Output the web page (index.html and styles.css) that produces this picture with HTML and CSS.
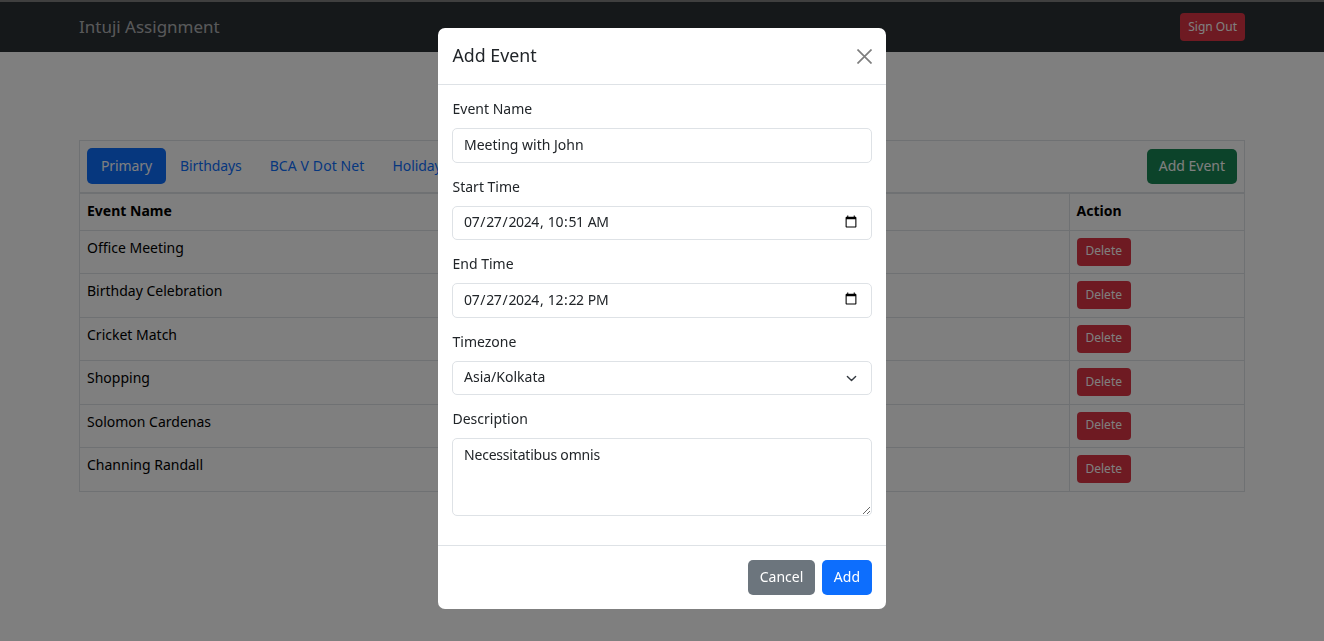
FILE: index.html
```html
<!DOCTYPE html>
<html lang="en">
<head>
  <meta charset="UTF-8" />
  <meta name="viewport" content="width=device-width, initial-scale=1.0"/>
  <title>Intuji Assignment</title>
  <link rel="stylesheet" href="styles.css">
</head>
<body>
  <nav class="navbar">
    <div class="container navbar-inner">
      <a class="brand" href="#">Intuji Assignment</a>
      <button class="btn btn-danger btn-signout">Sign Out</button>
    </div>
  </nav>

  <main class="container">
    <div class="events">
      <div class="events-head">
        <ul class="tabs">
          <li class="tab active">Primary</li>
          <li class="tab">Birthdays</li>
          <li class="tab tab-wide">BCA V Dot Net</li>
          <li class="tab">Holidays</li>
        </ul>
        <button class="btn btn-success">Add Event</button>
      </div>
      <table class="events-table">
        <thead>
          <tr><th>Event Name</th><th class="col-action">Action</th></tr>
        </thead>
        <tbody>
          <tr><td>Office Meeting</td><td><button class="btn btn-danger btn-small">Delete</button></td></tr>
          <tr><td>Birthday Celebration</td><td><button class="btn btn-danger btn-small">Delete</button></td></tr>
          <tr><td>Cricket Match</td><td><button class="btn btn-danger btn-small">Delete</button></td></tr>
          <tr><td>Shopping</td><td><button class="btn btn-danger btn-small">Delete</button></td></tr>
          <tr><td>Solomon Cardenas</td><td><button class="btn btn-danger btn-small">Delete</button></td></tr>
          <tr><td>Channing Randall</td><td><button class="btn btn-danger btn-small">Delete</button></td></tr>
        </tbody>
      </table>
    </div>
  </main>

  <div class="backdrop"></div>

  <div class="modal">
    <div class="modal-header">
      <h5 class="modal-title">Add Event</h5>
      <button class="btn-close" aria-label="Close">
        <svg viewBox="0 0 16 16" width="15" height="15"><path d="M.5.5 15.5 15.5M15.5.5.5 15.5" stroke="#000" stroke-width="1.8" fill="none"/></svg>
      </button>
    </div>
    <form class="modal-body">
      <label for="name">Event Name</label>
      <input class="field field-name" type="text" id="name" value="Meeting with John" />

      <label for="start">Start Time</label>
      <input class="field field-date field-short" type="datetime-local" id="start" value="2024-07-27T10:51" />

      <label for="end">End Time</label>
      <input class="field field-date" type="datetime-local" id="end" value="2024-07-27T12:22" />

      <label for="timezone">Timezone</label>
      <select class="field field-select field-short" id="timezone">
        <option>Asia/Kolkata</option>
      </select>

      <label for="description">Description</label>
      <textarea class="field field-text" id="description">Necessitatibus omnis</textarea>
    </form>
    <div class="modal-footer">
      <button class="btn btn-secondary btn-cancel">Cancel</button>
      <button class="btn btn-primary">Add</button>
    </div>
  </div>
</body>
</html>
```

FILE: styles.css
```css
* {
  box-sizing: border-box;
}
body {
  margin: 0;
  font-family: "Noto Sans", sans-serif;
  font-size: 14px;
  line-height: 21px;
  color: #212529;
  background: #fff;
  border-top: 2px solid #7f7f7f;
}
button {
  font-family: inherit;
}
.container {
  width: 1166px;
  margin: 0 auto;
}

.navbar {
  height: 50px;
  background: #2b3035;
}
.navbar-inner {
  height: 100%;
  display: flex;
  align-items: center;
  justify-content: space-between;
}
.brand {
  margin-top: -2px;
  font-size: 17px;
  color: rgba(255,255,255,0.65);
  text-decoration: none;
}

.btn {
  height: 35px;
  padding: 0 12px 2px;
  font-size: 14px;
  line-height: 21px;
  color: #fff;
  border: none;
  border-radius: 5px;
}
.btn-danger { background: #dc3545; }
.btn-success { background: #198754; }
.btn-secondary { background: #6c757d; }
.btn-primary { background: #0d6efd; }
.btn-cancel {
  padding: 0 11.5px 2px;
}
.btn-signout {
  height: 28px;
  padding: 0 8px 2px;
  font-size: 12px;
  border-radius: 4px;
}
.btn-small {
  display: block;
  height: 28px;
  padding: 0 9px 2px;
  font-size: 12px;
  border-radius: 4px;
}

.events {
  margin-top: 88px;
  border: 1px solid #dee2e6;
}
.events-head {
  display: flex;
  align-items: flex-start;
  justify-content: space-between;
  height: 51px;
  padding: 7px 7px 0;
}
.events-head .btn {
  margin-top: 1px;
}
.tabs {
  display: flex;
  margin: 0;
  padding: 0;
  list-style: none;
  letter-spacing: -0.1px;
}
.tab {
  height: 36px;
  padding: 7px 14px 8px;
  color: #0d6efd;
  border-radius: 5px;
}
.tab-wide {
  letter-spacing: 0.1px;
}
.tab.active {
  color: #fff;
  background: #0d6efd;
}

.events-table {
  width: 100%;
  border-collapse: collapse;
  border-top: 2px solid #dee2e6;
}
.events-table th,
.events-table td {
  padding: 7px;
  line-height: 19px;
  text-align: left;
  vertical-align: top;
  border-bottom: 1px solid #dee2e6;
}
.events-table th {
  height: 37px;
  color: #000;
}
.events-table td {
  height: 43.5px;
  color: #000;
}
.events-table tr:last-child td {
  height: 43px;
  border-bottom: none;
}
.col-action,
.events-table td:last-child {
  width: 175px;
  border-left: 1px solid #dee2e6;
}

.backdrop {
  position: fixed;
  inset: 0;
  background: rgba(0,0,0,0.5);
}

.modal {
  position: fixed;
  top: 28px;
  left: 438px;
  width: 448px;
  background: #fff;
  border-radius: 7px;
}
.modal-header {
  display: flex;
  align-items: center;
  justify-content: space-between;
  height: 57px;
  padding: 0 14.5px;
  border-bottom: 1px solid #dee2e6;
}
.modal-title {
  margin: 0 0 2px;
  font-size: 17.8px;
  font-weight: 400;
  line-height: 26px;
}
.btn-close {
  width: 15px;
  height: 15px;
  padding: 0;
  border: none;
  background: none;
  opacity: 0.5;
}
.btn-close svg {
  display: block;
}
.modal-body {
  padding: 14px 14px 15px;
}
.modal-body label {
  display: block;
  margin-bottom: 10px;
  padding-left: 0.5px;
  line-height: 19px;
}
.field {
  display: block;
  width: 100%;
  height: 35px;
  margin-bottom: 14px;
  padding: 0 11px;
  font-family: inherit;
  font-size: 14px;
  color: #212529;
  background: #fff;
  border: 1px solid #dee2e6;
  border-radius: 5px;
}
.field-name {
  padding-bottom: 2px;
}
.field-date {
  padding: 0 11px 3px 10px;
  letter-spacing: -0.35px;
}
.field-short {
  height: 34px;
}
.field-select {
  padding-bottom: 3px;
  appearance: none;
  background-image: url("data:image/svg+xml,%3csvg xmlns='http://www.w3.org/2000/svg' viewBox='0 0 16 16'%3e%3cpath fill='none' stroke='%23343a40' stroke-linecap='round' stroke-linejoin='round' stroke-width='2' d='m2 5 6 6 6-6'/%3e%3c/svg%3e");
  background-repeat: no-repeat;
  background-position: right 14.5px center;
  background-size: 11px 11px;
}
.field-text {
  height: 78px;
  padding-top: 5px;
  line-height: 21px;
  letter-spacing: -0.2px;
}
.modal-footer {
  display: flex;
  justify-content: flex-end;
  gap: 7px;
  height: 64px;
  padding: 14px;
  border-top: 1px solid #dee2e6;
}
```
